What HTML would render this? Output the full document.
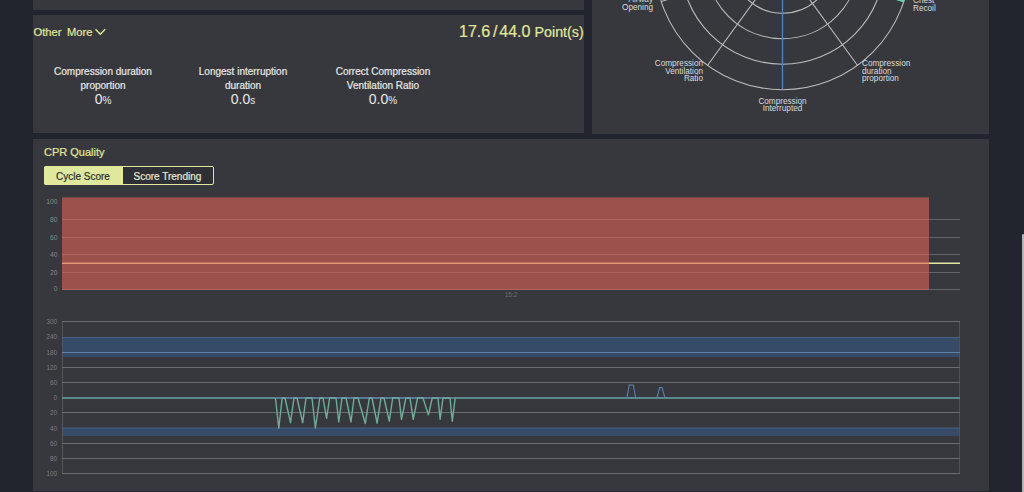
<!DOCTYPE html>
<html><head><meta charset="utf-8">
<style>
html,body{margin:0;padding:0;width:1024px;height:492px;overflow:hidden;background:#22252d;font-family:"Liberation Sans",sans-serif;}
.p{position:absolute;background:#37383d;}
.t{position:absolute;white-space:nowrap;line-height:1;-webkit-text-stroke:0.2px currentColor;}
.y{color:#e0e89c;}
.w{color:#e6e6e6;}
.metric{position:absolute;width:140px;text-align:center;color:#e8e8e8;font-size:10px;line-height:13.5px;-webkit-text-stroke:0.2px currentColor;}
.metric .v{font-size:14px;line-height:15px;-webkit-text-stroke:0;}
.metric .v small{font-size:10px;}
svg{position:absolute;left:0;top:0;}
</style></head>
<body>
<div class="p" style="left:33px;top:0;width:551px;height:10px"></div>
<div class="p" style="left:33px;top:15px;width:551px;height:118px"></div>
<div class="p" style="left:592px;top:0;width:397px;height:134px"></div>
<div class="p" style="left:33px;top:139px;width:956px;height:352px"></div>
<div style="position:absolute;left:1022px;top:234px;width:2px;height:258px;background:#b4b4b4;border-radius:1px 1px 0 0"></div>

<div class="t y" style="left:33.5px;top:26.5px;font-size:11.2px">Other</div><div class="t y" style="left:67px;top:26.5px;font-size:11.2px">More</div>
<svg width="1024" height="492" style="pointer-events:none">
  <polyline points="95.5,29.3 100.3,34.3 105.2,29.3" fill="none" stroke="#e0e89c" stroke-width="1.4"/>
</svg>
<div class="t y" style="left:459px;top:24px;font-size:16px">17.6</div><div class="t y" style="left:493px;top:24px;font-size:16px">/</div><div class="t y" style="left:499.3px;top:24px;font-size:16px">44.0</div><div class="t y" style="left:534.5px;top:24.7px;font-size:14.3px">Point(s)</div>

<div class="metric" style="left:33px;top:65px">Compression duration<br>proportion<div class="v">0<small>%</small></div></div>
<div class="metric" style="left:173px;top:65px">Longest interruption<br>duration<div class="v">0.0<small>s</small></div></div>
<div class="metric" style="left:313px;top:65px">Correct Compression<br>Ventilation Ratio<div class="v">0.0<small>%</small></div></div>

<div class="t y" style="left:44px;top:147px;font-size:11px">CPR Quality</div>
<div style="position:absolute;left:44px;top:166px;width:168px;height:17px;border:1px solid #e0e89c;background:#2e3035;border-radius:2px"></div>
<div style="position:absolute;left:44px;top:166px;width:79px;height:19px;background:#e0e89c;border-radius:2px 0 0 2px"></div>
<div class="t" style="left:56px;top:172px;font-size:10px;color:#2a2b2e">Cycle Score</div>
<div class="t" style="left:133.5px;top:172px;font-size:10px;color:#e8ead4">Score Trending</div>

<svg width="1024" height="492">
  <!-- chart 1 -->
  <g stroke="#636468" stroke-width="1">
    <line x1="62" y1="219.5" x2="960" y2="219.5"/>
    <line x1="62" y1="237.5" x2="960" y2="237.5"/>
    <line x1="62" y1="254.5" x2="960" y2="254.5"/>
    <line x1="62" y1="272.5" x2="960" y2="272.5"/>
    <line x1="62" y1="289.5" x2="960" y2="289.5"/>
  </g>
  <line x1="62" y1="263.3" x2="960" y2="263.3" stroke="#e2e8a0" stroke-width="1.5"/>
  <rect x="62" y="197.4" width="867" height="92.6" fill="rgb(225,99,86)" fill-opacity="0.6"/>
  <g font-family="Liberation Sans" font-size="6.8" fill="#86878b" text-anchor="end">
    <text x="57.5" y="203.5">100</text><text x="57.5" y="221.5">80</text><text x="57.5" y="239.5">60</text>
    <text x="57.5" y="256.5">40</text><text x="57.5" y="274.5">20</text><text x="57.5" y="291">0</text>
  </g>
  <text x="511" y="297" font-family="Liberation Sans" font-size="6.5" fill="#6a6b70" text-anchor="middle">15:2</text>

  <!-- chart 2 -->
  <rect x="62" y="337" width="898" height="20" fill="#354b68"/>
  <rect x="62" y="428" width="898" height="8" fill="#354b68"/>
  <g stroke="#6a6b70" stroke-width="1">
    <line x1="62.5" y1="321.5" x2="62.5" y2="474" stroke="#56575c"/><line x1="959.5" y1="321.5" x2="959.5" y2="474" stroke="#505156"/>
    <line x1="62" y1="321.5" x2="960" y2="321.5"/>
    <line x1="62" y1="367.5" x2="960" y2="367.5"/>
    <line x1="62" y1="382.5" x2="960" y2="382.5"/>
    <line x1="62" y1="412.5" x2="960" y2="412.5"/>
    <line x1="62" y1="443.5" x2="960" y2="443.5"/>
    <line x1="62" y1="458.5" x2="960" y2="458.5"/>
    <line x1="62" y1="473.5" x2="960" y2="473.5"/>
  </g>
  <line x1="62" y1="337.5" x2="960" y2="337.5" stroke="#4a6080" stroke-width="1"/>
  <line x1="62" y1="352.5" x2="960" y2="352.5" stroke="#5f80a6" stroke-width="1"/>
  <line x1="62" y1="428" x2="960" y2="428" stroke="#4a6080" stroke-width="1"/>
  <line x1="62" y1="398" x2="275.5" y2="398" stroke="#68a6a6" stroke-width="1.7"/><line x1="455" y1="398" x2="960" y2="398" stroke="#68a6a6" stroke-width="1.7"/><line x1="275.5" y1="398" x2="455" y2="398" stroke="#5d7699" stroke-width="2"/>
  <g font-family="Liberation Sans" font-size="6.3" fill="#7c7d82" text-anchor="end">
    <text x="57" y="324">300</text><text x="57" y="339">240</text><text x="57" y="355">180</text>
    <text x="57" y="370">120</text><text x="57" y="385">60</text><text x="57" y="400">0</text>
    <text x="57" y="415">20</text><text x="57" y="431">40</text><text x="57" y="446">60</text>
    <text x="57" y="461">80</text><text x="57" y="476">100</text>
  </g>
  <polyline fill="none" stroke="#6cae98" stroke-width="1.4" stroke-linejoin="round"
    points="275.4,398 278.8,428 282.2,398 285,398 290.5,422.7 294,398 297,398 302.7,422.7 306,398 312,398 315.4,428 319.8,398 323,398 326.6,418.3 329.6,398 336,398 338.8,422 342,398 346,398 351,422 354,398 358,398 365.3,423.5 369.3,398 372,398 377.1,423.2 381,398 384,398 389.3,421.2 392.7,398 399,398 401.5,419.3 405.9,398 410,398 413.2,419.3 417.6,398 423,398 428.4,414.9 432.3,398 438,398 440.1,419.3 443,398 450,398 452.3,421.2 455.2,398"/>
  <polyline fill="none" stroke="#5a7fb0" stroke-width="1.1" points="626.9,398 629.2,385 633.3,385 635.7,398"/>
  <polyline fill="none" stroke="#5a7fb0" stroke-width="1.1" points="656.8,398 659.7,387.6 662,387.6 665,398"/>

  <!-- radar -->
  <g fill="none" stroke="#bcbcbc" stroke-width="1.1">
    <circle cx="782.5" cy="-37.8" r="25.5"/>
    <circle cx="782.5" cy="-37.8" r="51"/>
    <circle cx="782.5" cy="-37.8" r="76.5"/>
    <circle cx="782.5" cy="-37.8" r="102"/>
    <circle cx="782.5" cy="-37.8" r="127.5"/>
    <line x1="782.5" y1="-37.8" x2="707.6" y2="65.3"/>
    <line x1="782.5" y1="-37.8" x2="857.4" y2="65.3"/>
    <line x1="782.5" y1="-37.8" x2="661.2" y2="1.6"/>
    <line x1="782.5" y1="-37.8" x2="903.8" y2="1.6"/>
  </g>
  <line x1="782.5" y1="-37.8" x2="782.5" y2="89.7" stroke="#4a88c8" stroke-width="1.3"/>
  <polygon points="896,0 904.5,0 904,2.5" fill="#5fd0b0"/>
  <g font-family="Liberation Sans" font-size="8.2" fill="#dcdcdc">
    <text x="653" y="2" text-anchor="end">Airway</text>
    <text x="653" y="10" text-anchor="end">Opening</text>
    <text x="913" y="3">Chest</text>
    <text x="913" y="10.5">Recoil</text>
    <text x="703" y="66.3" text-anchor="end">Compression</text>
    <text x="703" y="73.8" text-anchor="end">Ventilation</text>
    <text x="703" y="81.3" text-anchor="end">Ratio</text>
    <text x="862" y="66.3">Compression</text>
    <text x="862" y="73.8">duration</text>
    <text x="862" y="81.3">proportion</text>
    <text x="782.5" y="104" text-anchor="middle">Compression</text>
    <text x="782.5" y="111.3" text-anchor="middle">Interrupted</text>
  </g>
</svg>
</body></html>
